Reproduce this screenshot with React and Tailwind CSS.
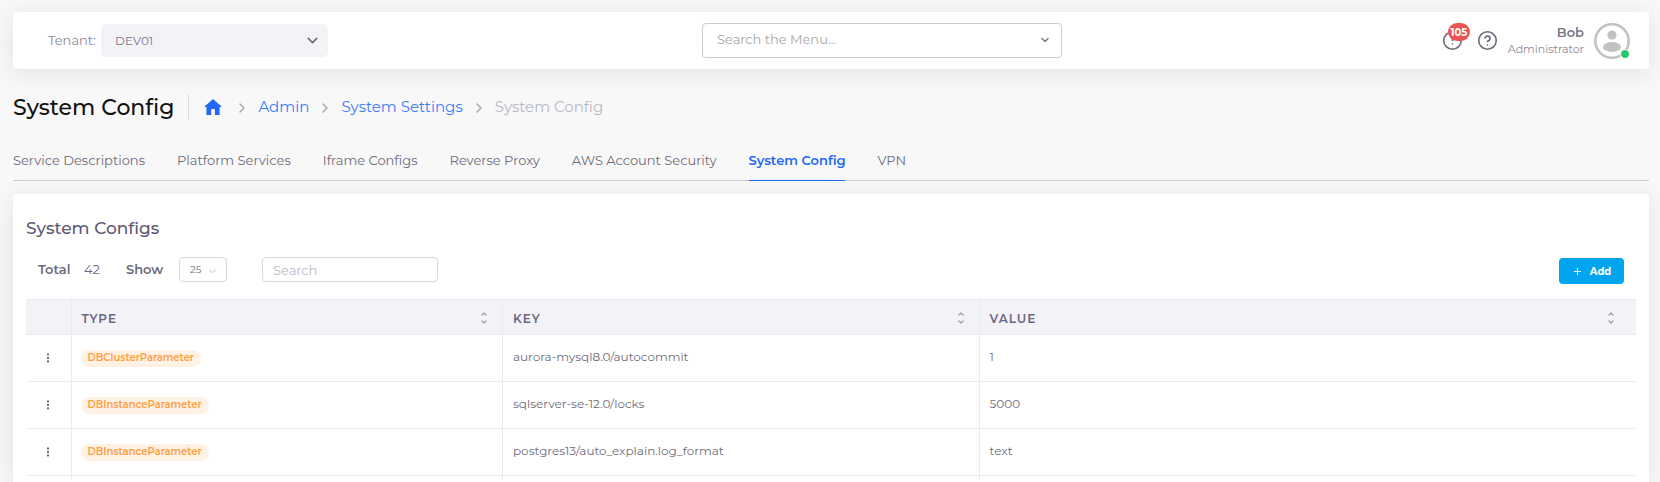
import React from "react";
import { ChevronDown, ChevronRight, ChevronUp, CircleAlert, CircleHelp, EllipsisVertical, Plus } from "lucide-react";

const tabs = [
  "Service Descriptions",
  "Platform Services",
  "Iframe Configs",
  "Reverse Proxy",
  "AWS Account Security",
  "System Config",
  "VPN",
];

const rows = [
  { type: "DBClusterParameter", key: "aurora-mysql8.0/autocommit", value: "1" },
  { type: "DBInstanceParameter", key: "sqlserver-se-12.0/locks", value: "5000" },
  { type: "DBInstanceParameter", key: "postgres13/auto_explain.log_format", value: "text" },
];

function Header() {
  return (
    <header className="flex h-[57px] items-center justify-between rounded-[3px] bg-white pr-[19px] pl-[35px] shadow-[0_4px_24px_0_rgba(34,41,47,0.1)]">
      <div className="flex flex-1 items-center gap-[5px]">
        <label htmlFor="tenant" className="w-12 text-[13px] text-[#8b8896]">Tenant:</label>
        <div className="relative w-[227px]">
          <select id="tenant" className="h-[33px] w-full appearance-none rounded-[5px] bg-[#f3f2f7] pl-[14px] text-[12px] text-[#7b7887]">
            <option>DEV01</option>
          </select>
          <ChevronDown className="pointer-events-none absolute top-2 right-[7px] size-[17px] text-[#6e6b7b]" strokeWidth={2.2} />
        </div>
      </div>
      <div className="relative ml-[86px] w-[360px]">
        <input aria-label="Search the Menu" placeholder="Search the Menu..." className="h-[35px] w-full rounded-[4px] border border-[#cccccc] bg-white pr-8 pb-[3px] pl-[14px] text-[13px] text-[#6e6b7b] placeholder:text-[#a6a6a6]" />
        <ChevronDown className="pointer-events-none absolute top-[11px] right-[11px] size-3 text-[#808080]" strokeWidth={3.2} />
      </div>
      <div className="flex flex-1 items-center justify-end">
        <button type="button" aria-label="Alerts" className="relative mr-[14px] text-[#6e6b7b]">
          <CircleAlert className="size-[21px]" strokeWidth={1.9} />
          <span className="absolute -top-[7px] left-[6px] flex h-[18px] w-[22px] items-center justify-center rounded-full bg-[#ea5455] text-[10px] font-bold text-white">105</span>
        </button>
        <button type="button" aria-label="Help" className="mr-[10px] text-[#6e6b7b]">
          <CircleHelp className="size-[21px]" strokeWidth={1.9} />
        </button>
        <div className="mr-[10px] text-right">
          <div className="text-[13px] leading-4 font-semibold text-[#7a7786]">Bob</div>
          <div className="text-[11px] leading-[18px] text-[#8b8896]">Administrator</div>
        </div>
        <div className="relative">
          <svg viewBox="0 0 36 36" className="size-9" aria-hidden="true">
            <circle cx="18" cy="18" r="16.7" fill="#fff" stroke="#c2c2c2" strokeWidth="2.6" />
            <circle cx="18" cy="12" r="4.6" fill="#c2c2c2" />
            <ellipse cx="18" cy="24" rx="9" ry="5" fill="#c2c2c2" />
          </svg>
          <span className="absolute right-0 bottom-0 size-[10px] rounded-full border border-white bg-[#28c76f]" />
        </div>
      </div>
    </header>
  );
}

function Separator() {
  return <ChevronRight aria-hidden="true" className="size-4 text-[#a9a7b0]" strokeWidth={2.2} />;
}

function Breadcrumb() {
  return (
    <div className="mt-[25px] flex h-[27px] items-center">
      <h1 className="border-r border-[#d6dce1] pr-[14px] text-[22px] leading-[27px] font-medium text-[#111111]">System Config</h1>
      <nav aria-label="Breadcrumb" className="flex items-center gap-2 pl-[15px] text-[15px] text-[#3b7bfa]">
        <a href="#home" aria-label="Home" className="mr-1">
          <svg viewBox="0 0 18 16" className="mb-[2px] h-4 w-[18px] fill-[#2267f5]">
            <path d="M9 0 0 8h2.4v8h4.7v-5a1 1 0 0 1 1-1h1.8a1 1 0 0 1 1 1v5h4.7V8H18Z" />
          </svg>
        </a>
        <Separator />
        <a href="#admin">Admin</a>
        <Separator />
        <a href="#settings">System Settings</a>
        <Separator />
        <span className="text-[#b9b9c3]">System Config</span>
      </nav>
    </div>
  );
}

function Tabs() {
  return (
    <nav aria-label="Settings" className="mt-[21px] flex h-[39px] gap-8 border-b border-[#cccccc] text-[13px] leading-9 whitespace-nowrap text-[#6e6b7b]">
      {tabs.map((tab) =>
        tab === "System Config" ? (
          <a key={tab} href="#tab" aria-current="page" className="h-[39px] border-b border-[#2267f5] font-semibold text-[#2267f5]">{tab}</a>
        ) : (
          <a key={tab} href="#tab">{tab}</a>
        )
      )}
    </nav>
  );
}

function HeadCell({ children }) {
  return (
    <th className="border border-r-0 border-[#ebe9f1] pr-[14px] pl-[10px] last:pr-[21px]">
      <span className="flex items-center justify-between pt-[3px]">
        <span className="text-[12px] leading-4 font-semibold tracking-[1px] text-[#6a6681]">{children}</span>
        <span className="-mt-[2px] flex flex-col text-[#a09dad]">
          <ChevronUp className="size-2" strokeWidth={4} />
          <ChevronDown className="size-2" strokeWidth={4} />
        </span>
      </span>
    </th>
  );
}

function ConfigTable() {
  return (
    <table className="mt-4 w-full table-fixed border-collapse text-left text-[12px] text-[#6e6b7b]">
      <colgroup>
        <col className="w-[45px]" />
        <col className="w-[26.8%]" />
        <col className="w-[29.6%]" />
        <col />
      </colgroup>
      <thead>
        <tr className="h-[35px] bg-[#f3f2f7]">
          <th className="border-y border-[#ebe9f1]" aria-label="Actions" />
          <HeadCell>TYPE</HeadCell>
          <HeadCell>KEY</HeadCell>
          <HeadCell>VALUE</HeadCell>
        </tr>
      </thead>
      <tbody>
        {rows.map((row) => (
          <tr key={row.key} className="h-[47px] border-b border-[#ebe9f1]">
            <td className="pb-[2px] text-center">
              <button type="button" aria-label="Row actions" className="align-middle">
                <EllipsisVertical className="size-3" strokeWidth={2.6} />
              </button>
            </td>
            <td className="border-l border-[#ebe9f1] pl-[9px]">
              <span className="inline-block h-[17px] rounded-full bg-[#fff1e3] px-[7px] align-middle text-[10px] leading-4 font-semibold text-[#ff9f43]">{row.type}</span>
            </td>
            <td className="border-l border-[#ebe9f1] pb-[2px] pl-[10px]">{row.key}</td>
            <td className="border-l border-[#ebe9f1] pb-[2px] pl-[10px]">{row.value}</td>
          </tr>
        ))}
        <tr className="h-1">
          <td />
          <td className="border-l border-[#ebe9f1]" />
          <td className="border-l border-[#ebe9f1]" />
          <td className="border-l border-[#ebe9f1]" />
        </tr>
      </tbody>
    </table>
  );
}

export default function App() {
  return (
    <div className="flex min-h-screen flex-col bg-[#f8f8f8] pt-3 pr-[11px] pl-[13px] font-['Montserrat','Inter',sans-serif]">
      <Header />
      <Breadcrumb />
      <Tabs />
      <main className="mt-[13px] flex-1 rounded-t-[3px] bg-white px-[13px] pt-[22px] shadow-[0_4px_24px_0_rgba(34,41,47,0.1)]">
        <h2 className="text-[17px] leading-6 font-medium text-[#5e5873]">System Configs</h2>
        <div className="mt-4 flex h-[27px] items-center text-[13px] text-[#6e6b7b]">
          <span className="w-[45px] pl-3 font-semibold whitespace-nowrap">Total</span>
          <span className="w-[55px] pl-[13px]">42</span>
          <label htmlFor="page-size" className="w-[53px] font-semibold">Show</label>
          <div className="relative w-12">
            <select id="page-size" className="h-[25px] w-full appearance-none rounded-[4px] border border-[#d8d6de] bg-white pl-[10px] text-[10px]">
              <option>25</option>
            </select>
            <ChevronDown className="pointer-events-none absolute top-[9px] right-[9px] size-[11px] text-[#b9b8c0]" />
          </div>
          <input aria-label="Search" placeholder="Search" className="ml-[35px] h-[25px] w-44 rounded-[4px] border border-[#d8d6de] pl-[10px] text-[13px] placeholder:text-[#b9b9c3]" />
          <button type="button" className="mt-[3px] mr-3 ml-auto flex h-[26px] w-[65px] items-center justify-center gap-[7px] rounded-[4px] bg-[#00a4ef] text-[10px] font-bold text-white">
            <Plus className="size-[11px]" />
            Add
          </button>
        </div>
        <ConfigTable />
      </main>
    </div>
  );
}
